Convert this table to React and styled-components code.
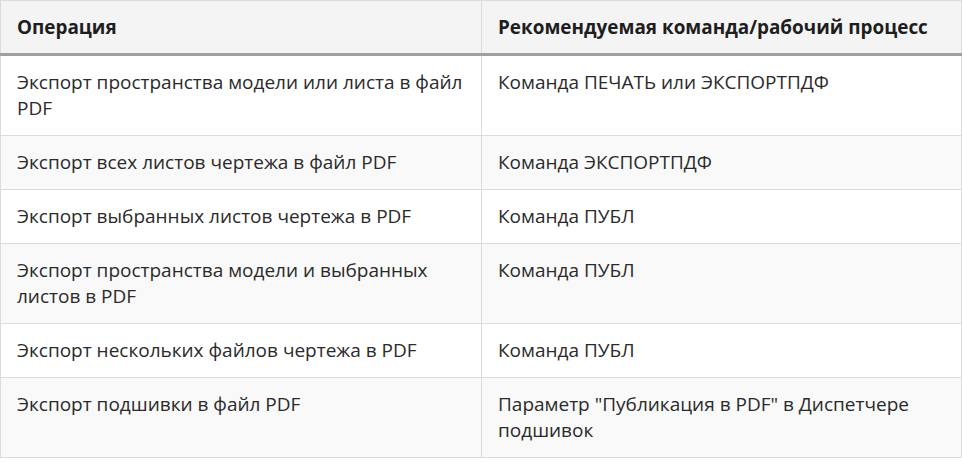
import React from "react";
import styled, { createGlobalStyle } from "styled-components";

const Global = createGlobalStyle`
  html, body { margin: 0; padding: 0; background: #fff; }
  body { font-family: "Open Sans", "Noto Sans", sans-serif; }
`;

const Table = styled.table`
  width: 962px;
  border-collapse: collapse;
  table-layout: fixed;
  font-size: 19px;
  line-height: 26px;
  color: #2a2a2a;
`;

const HeadCell = styled.th`
  background: #f4f4f4;
  text-align: left;
  font-weight: 700;
  font-size: 18.9px;
  padding: 13px 16px;
  border: 1px solid #dcdcdc;
  border-bottom: 3px solid #a0a0a0;
  color: #1e1e1e;
`;

const Row = styled.tr`
  background: ${(p) => (p.$striped ? "#f9f9f9" : "#ffffff")};
`;

const Cell = styled.td`
  vertical-align: top;
  padding: 13px 16px 14px;
  border: 1px solid #dcdcdc;
`;

const rows = [
  ["Экспорт пространства модели или листа в файл PDF", "Команда ПЕЧАТЬ или ЭКСПОРТПДФ"],
  ["Экспорт всех листов чертежа в файл PDF", "Команда ЭКСПОРТПДФ"],
  ["Экспорт выбранных листов чертежа в PDF", "Команда ПУБЛ"],
  ["Экспорт пространства модели и выбранных листов в PDF", "Команда ПУБЛ"],
  ["Экспорт нескольких файлов чертежа в PDF", "Команда ПУБЛ"],
  ["Экспорт подшивки в файл PDF", "Параметр \"Публикация в PDF\" в Диспетчере подшивок"],
];

export default function App() {
  return (
    <>
      <Global />
      <Table>
        <colgroup>
          <col style={{ width: "481px" }} />
          <col />
        </colgroup>
        <thead>
          <tr>
            <HeadCell>Операция</HeadCell>
            <HeadCell>Рекомендуемая команда/рабочий процесс</HeadCell>
          </tr>
        </thead>
        <tbody>
          {rows.map(([a, b], i) => (
            <Row key={i} $striped={i % 2 === 1}>
              <Cell>{a}</Cell>
              <Cell>{b}</Cell>
            </Row>
          ))}
        </tbody>
      </Table>
    </>
  );
}
